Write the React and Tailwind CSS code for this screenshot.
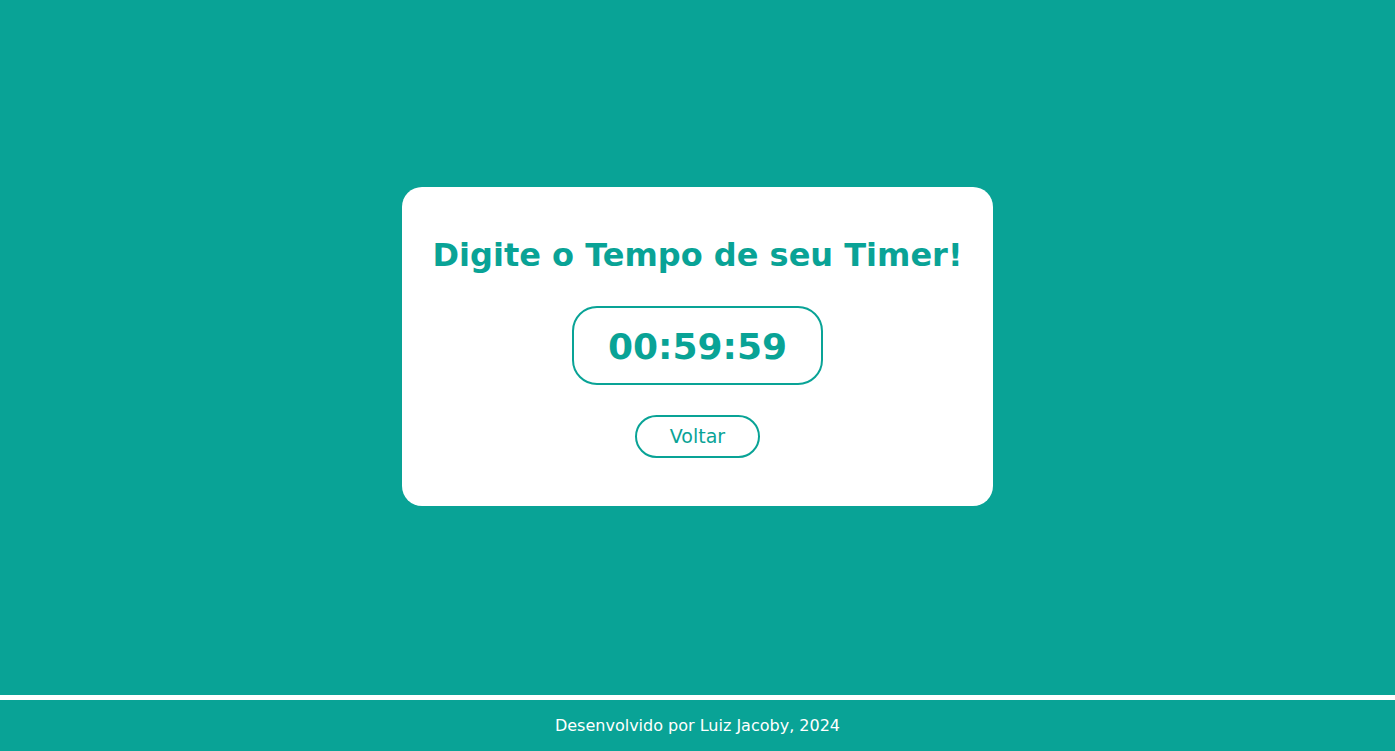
export default function App() {
    return (
        <div className="min-h-screen flex flex-col bg-[#09a396] font-['DejaVu_Sans',Verdana,sans-serif]">
            {/* Timer card */}
            <main className="flex-1 flex items-center justify-center">
                <div className="w-[591px] mb-[2px] bg-white rounded-[20px] pt-[50px] pb-[48px] flex flex-col items-center">
                    <h1 className="text-[32px] leading-[37px] font-bold text-[#09a396]">
                        Digite o Tempo de seu Timer!
                    </h1>
                    <div className="mt-[32px] w-[251px] h-[79px] border-2 border-[#09a396] rounded-[25px] flex items-center justify-center pt-[2px]">
                        <span className="text-[36px] font-bold text-[#09a396] leading-none">00:59:59</span>
                    </div>
                    <button className="mt-[30px] w-[125px] h-[43px] border-2 border-[#09a396] rounded-full text-[19px] text-[#09a396] bg-white">
                        Voltar
                    </button>
                </div>
            </main>

            {/* Footer */}
            <footer className="h-[56px] border-t-[5px] border-white flex items-center justify-center text-white text-[16px]">
                Desenvolvido por Luiz Jacoby, 2024
            </footer>
        </div>
    );
}
